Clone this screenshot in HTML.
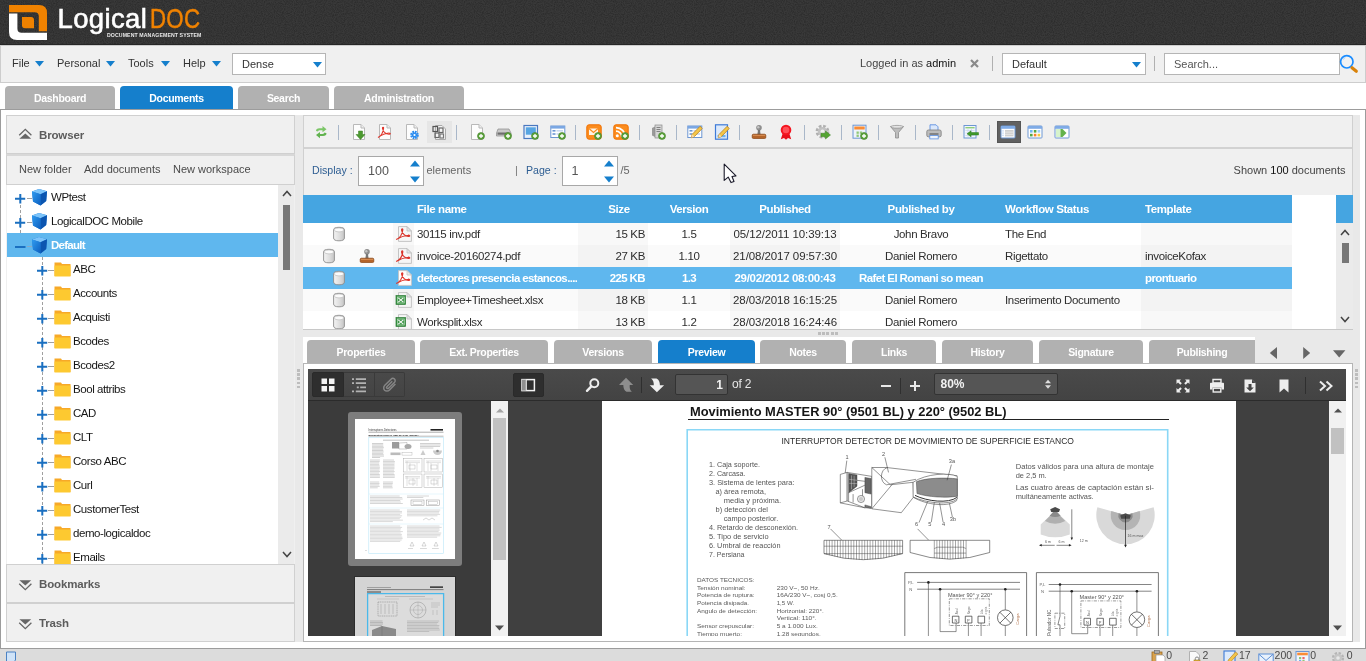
<!DOCTYPE html>
<html lang="en"><head><meta charset="utf-8"><title>LogicalDOC</title>
<style>
*{box-sizing:border-box;margin:0;padding:0}
html,body{width:1366px;height:661px;overflow:hidden;background:#fff;font-family:"Liberation Sans",sans-serif;font-size:11px;color:#333}
.abs{position:absolute}
span{white-space:nowrap}
#hdr{position:absolute;left:0;top:0;width:1366px;height:45px;background:#343434;overflow:hidden}
.logo-t{font-family:"Liberation Sans",sans-serif;font-size:27.5px;line-height:34px;letter-spacing:0.35px;color:#fff;-webkit-text-stroke:0.6px currentColor}
.lg1,.lg2{display:inline-block}
.logo-t .lg2{transform:scaleX(.81);transform-origin:0 0;margin-left:3px;-webkit-text-stroke:0.5px currentColor}
.logo-t .lg2{color:#f08200}
.logo-s{font-size:5.2px;font-weight:bold;color:#e8e8e8;letter-spacing:0.1px;line-height:6px}
#menubar{position:absolute;left:0;top:45px;width:1366px;height:38px;background:#f0f0f0;border:1px solid #cdcdcd}
#menubar>*{margin-top:-46px}
#menubar .abs{margin-left:-1px}
.mi{font-size:11px;line-height:13px;color:#333}
.sel{background:#fff;border:1px solid #b5b5b5}
.sel span{position:absolute;left:9px;top:4px;font-size:11px;line-height:13px;color:#333}
.vsep{width:1px;background:#b0b0b0}
.mtab{height:23px;background:#b1b1b1;border-radius:4px 4px 0 0;color:#fff;font-weight:bold;font-size:10.5px;text-align:center;line-height:25px}
.mtab.act{background:#157fcc}
.mtab span{display:inline-block;letter-spacing:-0.3px}
#pane{position:absolute;left:0;top:109px;width:1366px;height:540px;border:1px solid #9c9c9c;background:#fff}
#left{position:absolute;left:6px;top:115px;width:289px;height:527px;background:#f0f0f0}
.sect{width:289px;background:#f0f0f0;border:1px solid #d0d0d0}
.st{font-weight:bold;font-size:11.5px;line-height:13px;color:#5c5c5c;letter-spacing:-0.15px}
.ftool{width:289px;background:#f0f0f0;border:1px solid #d0d0d0;border-top:2px solid #d8d8d8;font-size:11px;color:#4a4a4a;line-height:13px}
.tree{background:#fff;overflow:hidden}
.trow{left:0;width:271px;height:24px}
.tsel{background:#5fb7ee}
.tsel .tt{color:#fff;font-weight:bold;letter-spacing:-0.75px}
.tt{font-size:11.5px;line-height:15px;color:#161616;letter-spacing:-0.43px}
.vdot{width:1px;background:repeating-linear-gradient(to bottom,#a0a0a0 0 3px,transparent 3px 5px)}
.hdash{height:1px;background:#a0a0a0}
#tb{position:absolute;left:303px;top:115px;width:1050px;height:34px;background:#f0f0f0;border:1px solid #d0d0d0;border-bottom:2px solid #d2d2d2}
.tsep{width:1px;height:15px;background:#a9b7c9}
#pg{position:absolute;left:303px;top:149px;width:1050px;height:46px;background:#f0f0f0;border-left:1px solid #d0d0d0;border-right:1px solid #d0d0d0}
.pl{margin-top:-1px;font-size:10.6px;line-height:13px;color:#2d5d92}
.pl2{margin-top:-1px;font-size:11px;line-height:13px;color:#666}
.spin{height:30px;margin-top:-1px;background:#fff;border:1px solid #a8a8a8}
.spin span{position:absolute;left:9px;top:7px;font-size:12.5px;line-height:15px;color:#555}
#grid{position:absolute;left:303px;top:195px;width:1050px;height:135px;background:#fff;overflow:hidden;border-bottom:1px solid #c8c8c8}
.gh{background:#45a5e1}
.ght{color:#fff;font-weight:bold;font-size:11.5px;line-height:15px;letter-spacing:-0.4px}
.grow{left:0;width:989px;height:22px;background:#fff}
.galt{background:#fafafa}
.gsel{background:#5fb7ee}
.gsel .gc{color:#fff;font-weight:bold;letter-spacing:-0.62px}
.gc{top:4px;font-size:11.5px;line-height:15px;color:#2e2e2e;letter-spacing:-0.35px}
.dtab{height:23px}
#dpane{position:absolute;left:303px;top:363px;width:1050px;height:279px;border:1px solid #b5b5b5;background:#fff}
#pdf{position:absolute;left:308px;top:369px;width:1038px;height:267px;background:#404040;overflow:hidden}
#ptb{left:0;top:0;width:1038px;height:32px;background:linear-gradient(#4a4a4a,#434343);border-bottom:1px solid #2b2b2b}
#psb{left:0;top:32px;width:200px;height:236px;background:#3b3b3b}
.pin{background:#555;border:1px solid #333;border-radius:2px;color:#eee}
.pin span{position:absolute;right:4px;top:3px;font-size:12px;line-height:14px;color:#f2f2f2;font-weight:bold}
.ptx{font-size:12px;line-height:14px;color:#e6e6e6;letter-spacing:-0.2px}
#page{left:294px;top:32px;width:634px;height:236px;background:#fff;overflow:hidden}
#status{position:absolute;left:0;top:649px;width:1366px;height:12px;background:#dcdcdc;overflow:hidden}
.sbt{font-size:10.5px;line-height:12px;color:#4a4a4a}

.gc.gd{letter-spacing:-0.08px}
.gsel .gc.gd{letter-spacing:-0.3px}

body{will-change:transform}

</style></head><body>
<svg width="0" height="0" style="position:absolute"><defs>

<filter id="i-nf" x="0" y="0" width="100%" height="100%" color-interpolation-filters="sRGB"><feTurbulence type="fractalNoise" baseFrequency="0.9" numOctaves="2" seed="3"/><feColorMatrix type="matrix" values="0 0 0 0 0.1  0 0 0 0 0.1  0 0 0 0 0.1  0.9 0 0 0 -0.3"/></filter>
<pattern id="i-noise" width="200" height="45" patternUnits="userSpaceOnUse"><rect width="200" height="45" filter="url(#i-nf)"/></pattern>
<linearGradient id="i-gcube1" x1="0" y1="0" x2="1" y2="1"><stop offset="0" stop-color="#2f9cf0"/><stop offset="1" stop-color="#0d5fc0"/></linearGradient>
<symbol id="i-cube" viewBox="0 0 17 18"><path d="M1 3.5L8 1L16 3.2L15.2 13L9.5 17.5L2 13.5Z" fill="#1672d0"/><path d="M1 3.5L8 1L16 3.2L9.5 6.2Z" fill="#7cc4fa"/><path d="M9.5 6.2L16 3.2L15.2 13L9.5 17.5Z" fill="#0b55b0"/><path d="M1 3.5L9.5 6.2V17.5L2 13.5Z" fill="url(#i-gcube1)"/></symbol>
<symbol id="i-folder" viewBox="0 0 17 16"><path d="M0.5 1.5H7L8 3H16.5V15H0.5Z" fill="#f7a928"/><path d="M0.5 4.5H16.5V15.5H0.5Z" fill="#fdc930"/></symbol>
<symbol id="i-page0" viewBox="0 0 16 16"><path d="M2.5 0.5H10L13.5 4V15.5H2.5Z" fill="#fdfdfd" stroke="#b9b9b9"/><path d="M10 0.5V4H13.5" fill="#eee" stroke="#b9b9b9"/></symbol>
<symbol id="i-plus" viewBox="0 0 16 16"><circle cx="12" cy="12" r="3.5" fill="#5ca43c" stroke="#447f28" stroke-width=".6"/><path d="M12 10V14M10 12H14" stroke="#fff" stroke-width="1.3"/></symbol>
<symbol id="i-refresh" viewBox="0 0 16 16"><path d="M3 7Q3 4.2 6.5 4.2H9.5V2L13.5 5.2L9.5 8.2V6.3H7Q5.2 6.3 5 7.6Z" fill="#7cc668"/><path d="M13.5 9.3Q13.5 12 10 12H7V14.2L3 11L7 8V9.9H9.5Q11.3 9.9 11.5 8.6Z" fill="#62b350"/></symbol>
<symbol id="i-docdown" viewBox="0 0 16 16"><use href="#i-page0"/><path d="M7.5 7H11.5V10.5H14L9.5 15.5L5 10.5H7.5Z" fill="#4c9a2f" stroke="#3a7d22" stroke-width=".5"/></symbol>
<symbol id="i-pdf" viewBox="0 0 16 16"><use href="#i-page0"/><path d="M1 13.5C3 12.5 6 9 6.6 4.2C6.8 2.8 5.2 2.8 5.5 4.5C6 7.5 9 10.5 12.5 10.2C14 10 13 8.8 11.5 9C8 9.3 4 11.5 1 13.5Z" fill="none" stroke="#e0352b" stroke-width="1.1"/></symbol>
<symbol id="i-docgear" viewBox="0 0 16 16"><use href="#i-page0"/><circle cx="10.5" cy="11" r="3" fill="none" stroke="#2b8cf0" stroke-width="2.6" stroke-dasharray="1.6 0.75"/><circle cx="10.5" cy="11" r="2.6" fill="#2b8cf0"/><circle cx="10.5" cy="11" r="1.1" fill="#fff"/></symbol>
<symbol id="i-docs2" viewBox="0 0 16 16"><path d="M4.5 1.5H11L14.5 5V15.5H4.5Z" fill="#f4f4f4" stroke="#aaa"/><rect x="2" y="2.5" width="4.5" height="5" fill="none" stroke="#555" stroke-width="1.2"/><rect x="8" y="4" width="4" height="4.5" fill="none" stroke="#666" stroke-width="1.2"/><rect x="4" y="9" width="4" height="4.5" fill="none" stroke="#666" stroke-width="1.2"/><rect x="9" y="10" width="3.5" height="4" fill="none" stroke="#777" stroke-width="1.2"/></symbol>
<symbol id="i-docadd" viewBox="0 0 16 16"><use href="#i-page0"/><use href="#i-plus"/></symbol>
<symbol id="i-scanadd" viewBox="0 0 16 16"><path d="M2 5H13L15 9V12H0.5V9Z" fill="#c9c9c9" stroke="#8a8a8a" stroke-width=".7"/><rect x="1.5" y="8.5" width="12" height="2.2" fill="#6e6e6e"/><use href="#i-plus"/></symbol>
<symbol id="i-imgadd" viewBox="0 0 16 16"><rect x="1" y="1.5" width="13.5" height="13" fill="#eaf1fb" stroke="#4a78c0" stroke-width="1.2"/><rect x="2.8" y="3.3" width="10" height="7.4" fill="#57a5e2"/><use href="#i-plus"/></symbol>
<symbol id="i-form0" viewBox="0 0 16 16"><rect x="0.8" y="2" width="14" height="11.5" fill="#fff" stroke="#6d97d3" stroke-width="1"/><rect x="0.8" y="2" width="14" height="2.6" fill="#7ba7e3"/><rect x="2.5" y="6" width="3" height="1.6" fill="#6d97d3"/><rect x="6.5" y="6" width="6.5" height="1.6" fill="#c8d8ee"/><rect x="2.5" y="9.2" width="3" height="1.6" fill="#6d97d3"/><rect x="6.5" y="9.2" width="6.5" height="1.6" fill="#c8d8ee"/></symbol>
<symbol id="i-formadd" viewBox="0 0 16 16"><use href="#i-form0"/><use href="#i-plus"/></symbol>
<symbol id="i-mailadd" viewBox="0 0 16 16"><rect x="0.8" y="0.8" width="14.4" height="14.4" rx="2.2" fill="#fb8c1e" stroke="#f07000" stroke-width="1"/><rect x="3" y="4.5" width="9" height="6.5" fill="#fff3e4"/><path d="M3 4.5L7.5 8.5L12 4.5" fill="none" stroke="#fb8c1e" stroke-width="1.2"/><use href="#i-plus"/></symbol>
<symbol id="i-rssadd" viewBox="0 0 16 16"><rect x="0.8" y="0.8" width="14.4" height="14.4" rx="2.2" fill="#fb8c1e" stroke="#f07000" stroke-width="1"/><circle cx="4.3" cy="11.7" r="1.5" fill="#fff"/><path d="M3 7.2A5.8 5.8 0 0 1 8.8 13M3 3.6A9.4 9.4 0 0 1 12.4 13" fill="none" stroke="#fff" stroke-width="1.7"/><use href="#i-plus"/></symbol>
<symbol id="i-srvadd" viewBox="0 0 16 16"><path d="M2 4L5 2.5V13L2 11.5Z" fill="#9a9a9a"/><rect x="5" y="1" width="7" height="13" fill="#d6d6d6" stroke="#8a8a8a" stroke-width=".7"/><path d="M6.5 3.5H10.5M6.5 5.5H10.5M6.5 7.5H10.5" stroke="#777" stroke-width=".9"/><use href="#i-plus"/></symbol>
<symbol id="i-pencil" viewBox="0 0 16 16"><path d="M13.2 2.2L15.2 4.6L7.5 12.5L4.3 13.8L5.2 10.3Z" fill="#f3c548" stroke="#b98324" stroke-width=".8"/><path d="M4.3 13.8L5.2 10.3L7.5 12.5Z" fill="#f4dcb0"/></symbol>
<symbol id="i-formedit" viewBox="0 0 16 16"><use href="#i-form0"/><use href="#i-pencil"/></symbol>
<symbol id="i-docedit" viewBox="0 0 16 16"><rect x="1.5" y="0.8" width="12" height="14.4" fill="#ddeafb" stroke="#3d7ad8" stroke-width="1.2"/><rect x="3.5" y="11" width="8" height="2.2" fill="#6fb2ee"/><use href="#i-pencil"/></symbol>
<symbol id="i-stamp" viewBox="0 0 16 16"><circle cx="8" cy="3.8" r="2.8" fill="#8e8e8e"/><circle cx="7.3" cy="3.2" r="1.2" fill="#c4c4c4"/><path d="M7 6H9L9.6 10.5H6.4Z" fill="#777"/><rect x="1.2" y="10.2" width="13.6" height="4.3" rx="1.2" fill="#b4642a" stroke="#8a4616" stroke-width=".7"/><rect x="2" y="11" width="12" height="1" fill="#d58a4e"/></symbol>
<symbol id="i-rosette" viewBox="0 0 16 16"><path d="M5 8.5L2.8 15.2L6 14L8 15.8L10 14L13.2 15.2L11 8.5Z" fill="#e8101a"/><circle cx="8" cy="6" r="5.3" fill="#f5141f"/><circle cx="8" cy="6" r="3.3" fill="#ff5058"/></symbol>
<symbol id="i-gear0" viewBox="0 0 16 16"><circle cx="7.5" cy="7.5" r="5.2" fill="none" stroke="#b0b0b0" stroke-width="3.4" stroke-dasharray="2.5 1.58"/><circle cx="7.5" cy="7.5" r="4.6" fill="#c2c2c2"/><circle cx="7.5" cy="7.5" r="2" fill="#f0f0f0"/></symbol>
<symbol id="i-gearnext" viewBox="0 0 16 16"><use href="#i-gear0"/><path d="M6 9.2H10.5V7L15.5 11L10.5 15V12.8H6Z" fill="#55a532" stroke="#3f8322" stroke-width=".5"/></symbol>
<symbol id="i-caladd" viewBox="0 0 16 16"><rect x="1" y="1.2" width="13" height="13" fill="#eef3fb" stroke="#6d97d3" stroke-width="1"/><rect x="2.3" y="2.5" width="10.4" height="3" fill="#fa8c35"/><rect x="4.5" y="7.5" width="2.3" height="2.3" fill="#8fc776"/><rect x="7.8" y="7.5" width="2.3" height="2.3" fill="#8fc776"/><rect x="4.5" y="10.6" width="2.3" height="2.3" fill="#8fc776"/><use href="#i-plus"/></symbol>
<symbol id="i-funnel" viewBox="0 0 16 16"><path d="M1.5 2.5H14.5L9.5 8.5V14H6.5V8.5Z" fill="#bdbdbd" stroke="#8d8d8d" stroke-width=".8"/><ellipse cx="8" cy="2.8" rx="6.3" ry="1.4" fill="#e4e4e4" stroke="#8d8d8d" stroke-width=".7"/></symbol>
<symbol id="i-printer" viewBox="0 0 16 16"><path d="M4 0.8H10L12 2.8V8H4Z" fill="#dbe8fb" stroke="#5d8fe0" stroke-width=".9"/><rect x="0.8" y="6" width="14.4" height="6.8" rx="1.6" fill="#bcbcbc" stroke="#7e7e7e" stroke-width=".8"/><rect x="3.5" y="9.3" width="9" height="1.4" fill="#6d6d6d"/><rect x="3.8" y="11.5" width="8.4" height="3.4" fill="#eef4fd" stroke="#5d8fe0" stroke-width=".8"/></symbol>
<symbol id="i-tblback" viewBox="0 0 16 16"><rect x="1" y="1.5" width="12" height="12.5" fill="#f3f7fd" stroke="#6d97d3" stroke-width="1"/><rect x="2.4" y="3" width="9.2" height="1.4" fill="#8fce7a"/><path d="M2.4 6.5H11.6M2.4 9H11.6M2.4 11.5H11.6M5 5V13M8.5 5V13" stroke="#c7d6ec" stroke-width=".7"/><path d="M4 9.8L8 6.8V8.6H15.5V11H8V12.8Z" fill="#3f9a2b" stroke="#2e7a1e" stroke-width=".5"/></symbol>
<symbol id="i-vlist" viewBox="0 0 16 16"><rect x="1" y="2" width="14" height="12" rx="0.8" fill="#fff" stroke="#6d97d3" stroke-width="1"/><rect x="1" y="2" width="14" height="2.8" fill="#7fabe6"/><rect x="5" y="6" width="8.5" height="6.4" fill="#cfcfcf"/><path d="M5 8.1H13.5M5 10.3H13.5" stroke="#f2f2f2" stroke-width=".7"/><path d="M3 6.3V12.3" stroke="#9ec2f2" stroke-width="1" stroke-dasharray="1.2 1"/></symbol>
<symbol id="i-vgrid" viewBox="0 0 16 16"><rect x="1" y="2" width="14" height="12" rx="0.8" fill="#fff" stroke="#6d97d3" stroke-width="1"/><rect x="1" y="2" width="14" height="2.8" fill="#7fabe6"/><rect x="3" y="6" width="2.6" height="2.6" fill="#72b7f5"/><rect x="6.8" y="6" width="2.6" height="2.6" fill="#56a642"/><rect x="10.6" y="6" width="2.6" height="2.6" fill="#9fd0fa"/><rect x="3" y="9.8" width="2.6" height="2.6" fill="#56a642"/><rect x="6.8" y="9.8" width="2.6" height="2.6" fill="#fb7f2c"/><rect x="10.6" y="9.8" width="2.6" height="2.6" fill="#f4cb3e"/></symbol>
<symbol id="i-vnext" viewBox="0 0 16 16"><rect x="1" y="2" width="14" height="12" rx="0.8" fill="#fff" stroke="#6d97d3" stroke-width="1"/><rect x="1" y="2" width="14" height="2.8" fill="#7fabe6"/><rect x="2" y="5" width="4.5" height="8" fill="#d6f3cc"/><path d="M6.5 5H8.5L12.5 9L8.5 13H6.5Z" fill="#63b24b"/></symbol>
<linearGradient id="i-gdisk" x1="0" y1="0" x2="1" y2="0"><stop offset="0" stop-color="#f4f4f4"/><stop offset=".55" stop-color="#dedede"/><stop offset="1" stop-color="#c4c4c4"/></linearGradient><symbol id="i-disk" viewBox="0 0 16 16"><path d="M2.6 3.8Q2.6 1.3 8 1.3Q13.4 1.3 13.4 3.8V12Q13.4 14.8 8 14.8Q2.6 14.8 2.6 12Z" fill="url(#i-gdisk)" stroke="#8c8c8c" stroke-width=".9"/><ellipse cx="8" cy="3.9" rx="4.7" ry="2" fill="#fbfbfb" stroke="#b0b0b0" stroke-width=".6"/></symbol>
<symbol id="i-xls" viewBox="0 0 16 16"><use href="#i-page0"/><rect x="0.5" y="5.5" width="8.5" height="8" fill="#2f8a3c"/><path d="M1.8 7L7.6 12M7.6 7L1.8 12" stroke="#fff" stroke-width="1.1"/><path d="M1.5 9.5H8" stroke="#bfe3c3" stroke-width=".6"/></symbol>
<symbol id="i-gpage" viewBox="0 0 18 16"><path d="M4.5 0.6H13L17.4 5V15.4H4.5Z" fill="#fdfdfd" stroke="#c4c4c4" stroke-width=".9"/><path d="M13 0.6V5H17.4Z" fill="#ececec" stroke="#c4c4c4" stroke-width=".8"/></symbol>
<symbol id="i-gpdf" viewBox="0 0 18 16"><use href="#i-gpage"/><path d="M2.2 13.6C5 12.3 8.2 8.5 8.8 4C9 2.4 7.4 2.4 7.6 4.2C8 7.5 11.5 10.8 15 10.4C16.4 10.2 15.6 9 14 9.2C10 9.6 5.5 11.5 2.2 13.6Z" fill="none" stroke="#e0352b" stroke-width="1.15"/></symbol>
<symbol id="i-gxls" viewBox="0 0 18 16"><use href="#i-gpage"/><rect x="2" y="3.6" width="9.6" height="8.8" fill="#3c9a47" stroke="#2c7c36" stroke-width=".7"/><rect x="3.4" y="5" width="6.8" height="6" fill="none" stroke="#d8f0da" stroke-width=".6"/><path d="M4.3 5.8L9.3 10.2M9.3 5.8L4.3 10.2" stroke="#fff" stroke-width="1.1"/></symbol>
<symbol id="i-pv_thumbs" viewBox="0 0 16 16"><path d="M1.5 1.5H7V7H1.5ZM9 1.5H14.5V7H9ZM1.5 9H7V14.5H1.5ZM9 9H14.5V14.5H9Z" fill="#f4f4f4"/></symbol>
<symbol id="i-pv_outline" viewBox="0 0 16 16"><path d="M1 2.2H3M4.8 2.2H15M1 6.2H3M4.8 6.2H15M5.8 10.3H7.8M9.2 10.3H15M1 14.3H3M4.8 14.3H15" stroke="#b2b2b2" stroke-width="1.7"/></symbol>
<symbol id="i-pv_attach" viewBox="0 0 16 16"><path d="M12.8 7.2L7.6 12.4C6.2 13.8 4.2 13.6 3.2 12.6C2.2 11.6 2 9.7 3.4 8.3L8.9 2.8C9.8 1.9 11.2 1.9 12 2.7C12.8 3.5 12.8 4.8 11.9 5.7L6.7 10.9C6.3 11.3 5.6 11.3 5.2 10.9C4.8 10.5 4.8 9.9 5.2 9.5L10 4.7" fill="none" stroke="#858585" stroke-width="1.3"/></symbol>
<symbol id="i-pv_sidebar" viewBox="0 0 16 16"><rect x="2" y="2.6" width="12.4" height="11" fill="none" stroke="#f2f2f2" stroke-width="1.5"/><rect x="2" y="2.6" width="4.3" height="11" fill="#8f8f8f"/><path d="M6.3 2.6V13.6" stroke="#f2f2f2" stroke-width="1"/></symbol>
<symbol id="i-pv_find" viewBox="0 0 16 16"><circle cx="9.3" cy="6.3" r="4" fill="none" stroke="#eee" stroke-width="2"/><path d="M6.3 9.4L2 13.8" stroke="#eee" stroke-width="2.4" stroke-linecap="round"/></symbol>
<symbol id="i-pv_up" viewBox="0 0 16 16"><path d="M8 0.7L15.2 8H11.7Q11.2 12.5 13.8 14.7H8.5Q5.3 13 5.3 8H1Z" fill="#8d8d8d"/></symbol>
<symbol id="i-pv_down" viewBox="0 0 16 16"><path d="M7.9 15.2L0.7 8.3H4.8Q5 3.5 2.1 1.4H7.5Q10.9 3 10.9 8.3H15.1Z" fill="#efefef"/></symbol>
<symbol id="i-pv_full" viewBox="0 0 16 16"><path d="M1.5 1.5H6L4.5 3L6.8 5.3L5.3 6.8L3 4.5L1.5 6ZM14.5 1.5V6L13 4.5L10.7 6.8L9.2 5.3L11.5 3L10 1.5ZM1.5 14.5V10L3 11.5L5.3 9.2L6.8 10.7L4.5 13L6 14.5ZM14.5 14.5H10L11.5 13L9.2 10.7L10.7 9.2L13 11.5L14.5 10Z" fill="#eee"/></symbol>
<symbol id="i-pv_print" viewBox="0 0 16 16"><path d="M4 1.5H12V5H4Z" fill="none" stroke="#eee" stroke-width="1.4"/><path d="M1 5.5Q1 4.8 1.8 4.8H14.2Q15 4.8 15 5.5V11.5H12.5V9.5H3.5V11.5H1Z" fill="#eee"/><rect x="4.2" y="10.2" width="7.6" height="3.8" fill="none" stroke="#eee" stroke-width="1.4"/></symbol>
<symbol id="i-pv_dl" viewBox="0 0 16 16"><path d="M2.5 1.5H10L13.5 5V14.5H2.5Z" fill="#eee"/><path d="M10 1.5V5H13.5Z" fill="#444"/><path d="M6.5 6H9.5V9.5H11.8L8 13.2L4.2 9.5H6.5Z" fill="#444"/></symbol>
<symbol id="i-pv_bm" viewBox="0 0 16 16"><path d="M3.5 1.5H12.5V14.5L8 10.5L3.5 14.5Z" fill="#eee"/></symbol>
<symbol id="i-pv_more" viewBox="0 0 16 16"><path d="M2 3.5L7 8L2 12.5M8.5 3.5L13.5 8L8.5 12.5" fill="none" stroke="#eee" stroke-width="2"/></symbol>
<symbol id="i-sb_note" viewBox="0 0 12 13"><path d="M1.5 1H10.5V9L7.5 12.5H1.5Z" fill="#cfe3f8" stroke="#4b82c4" stroke-width="1"/></symbol>
<symbol id="i-sb_clip" viewBox="0 0 16 14"><rect x="2" y="2" width="10" height="12" fill="#d9a24c" stroke="#9c6a22" stroke-width=".8"/><rect x="4.5" y="0.5" width="5" height="3" fill="#aaa" stroke="#666" stroke-width=".6"/><path d="M6 5H13L15 7V14H6Z" fill="#fff" stroke="#999" stroke-width=".7"/></symbol>
<symbol id="i-sb_lock" viewBox="0 0 16 14"><path d="M2.5 0.5H9L12.5 4V14H2.5Z" fill="#fafafa" stroke="#aaa" stroke-width=".9"/><rect x="7" y="9" width="6" height="5" fill="#e2b13c" stroke="#9c7a1c" stroke-width=".6"/><path d="M8.3 9V7.5Q8.3 6 10 6Q11.7 6 11.7 7.5V9" fill="none" stroke="#888" stroke-width="1"/></symbol>
<symbol id="i-sb_edit" viewBox="0 0 16 14"><rect x="1" y="1" width="11" height="12.5" fill="#ddeafb" stroke="#3d7ad8" stroke-width="1.1"/><path d="M12.5 2L14.8 4L7.5 12L4.5 13.2L5.3 10Z" fill="#f3c548" stroke="#b98324" stroke-width=".7"/></symbol>
<symbol id="i-sb_mail" viewBox="0 0 16 14"><rect x="0.8" y="3" width="14.4" height="10" fill="#e8f1fc" stroke="#5d8fd6" stroke-width="1"/><path d="M1 3.3L8 9.5L15 3.3" fill="none" stroke="#5d8fd6" stroke-width="1"/></symbol>
<symbol id="i-sb_cal" viewBox="0 0 16 14"><rect x="1" y="1.5" width="13" height="12" fill="#f2f6fc" stroke="#6d97d3" stroke-width="1"/><rect x="2.2" y="2.7" width="10.6" height="2.6" fill="#fa8c35"/><rect x="4" y="7" width="2.2" height="2.2" fill="#8fc776"/><rect x="7.4" y="7" width="2.2" height="2.2" fill="#e66"/><rect x="4" y="10" width="2.2" height="2.2" fill="#79aeea"/><rect x="7.4" y="10" width="2.2" height="2.2" fill="#8fc776"/></symbol>
<symbol id="i-sb_gear" viewBox="0 0 16 14"><circle cx="8" cy="8" r="4.6" fill="none" stroke="#b5b5b5" stroke-width="3" stroke-dasharray="2.2 1.41"/><circle cx="8" cy="8" r="4" fill="#c6c6c6"/><circle cx="8" cy="8" r="1.8" fill="#e8e8e8"/></symbol>

</defs></svg>
<div id="hdr">
<svg class="abs" style="left:0;top:0" width="1366" height="45"><rect width="1366" height="45" fill="#393939"/><rect width="1366" height="45" fill="url(#i-noise)"/><rect y="44" width="1366" height="1" fill="#262626"/></svg>
<svg class="abs" style="left:9px;top:5px" width="38" height="35" viewBox="0 0 38 35">
<path d="M0 0H30Q38 0 38 8V26.2H29.8V11.5Q29.8 7.3 25.5 7.3H0Z" fill="#f08200"/>
<path d="M0 8.6H8.4V23.5Q8.4 27.8 12.7 27.8H38V35H8Q0 35 0 27Z" fill="#fff"/>
<path d="M13 12H22Q25 12 25 15V23.3H16Q13 23.3 13 20.3Z" fill="#f08200"/>
</svg>
<div class="abs logo-t" style="left:57.5px;top:2px"><span class="lg1">Logical</span><span class="lg2">DOC</span></div>
<div class="abs logo-s" style="left:107px;top:31.5px">DOCUMENT MANAGEMENT SYSTEM</div>
</div>
<div id="menubar"><span class="abs mi" style="left:12px;top:57px">File</span><svg class="abs" style="left:35px;top:61px" width="9" height="6"><path d="M0 0H9L4.5 5.5Z" fill="#157fcc"/></svg><span class="abs mi" style="left:57px;top:57px">Personal</span><svg class="abs" style="left:106px;top:61px" width="9" height="6"><path d="M0 0H9L4.5 5.5Z" fill="#157fcc"/></svg><span class="abs mi" style="left:128px;top:57px">Tools</span><svg class="abs" style="left:161px;top:61px" width="9" height="6"><path d="M0 0H9L4.5 5.5Z" fill="#157fcc"/></svg><span class="abs mi" style="left:183px;top:57px">Help</span><svg class="abs" style="left:212px;top:61px" width="9" height="6"><path d="M0 0H9L4.5 5.5Z" fill="#157fcc"/></svg><div class="abs sel" style="left:232px;top:53px;width:94px;height:22px"><span>Dense</span></div><svg class="abs" style="left:313px;top:61.5px" width="9" height="6"><path d="M0 0H9L4.5 5.5Z" fill="#157fcc"/></svg><span class="abs mi" style="left:860px;top:57px;color:#444">Logged in as <span style="color:#111">admin</span></span><svg class="abs" style="left:970px;top:59px" width="9" height="9"><path d="M1 1L8 8M8 1L1 8" stroke="#8a8a8a" stroke-width="2.2"/></svg><div class="abs vsep" style="left:992px;top:56px;height:15px"></div><div class="abs sel" style="left:1002px;top:53px;width:144px;height:22px"><span>Default</span></div><svg class="abs" style="left:1132px;top:61.5px" width="9" height="6"><path d="M0 0H9L4.5 5.5Z" fill="#157fcc"/></svg><div class="abs vsep" style="left:1154px;top:56px;height:15px"></div><div class="abs sel" style="left:1164px;top:53px;width:176px;height:22px"><span style="color:#555">Search...</span></div><svg class="abs" style="left:1338px;top:53px" width="22" height="22" viewBox="0 0 22 22"><circle cx="8.8" cy="8.8" r="6.2" fill="#f2f2f2" stroke="#1a8cff" stroke-width="1.7"/><path d="M5 6.5L7.5 4.2" stroke="#9fd0ff" stroke-width="1"/><path d="M14 14.8L18.3 18.3" stroke="#d9820a" stroke-width="3.2" stroke-linecap="round"/></svg></div>
<div class="abs mtab" style="left:5px;top:86px;width:110px"><span>Dashboard</span></div><div class="abs mtab act" style="left:120px;top:86px;width:113px"><span>Documents</span></div><div class="abs mtab" style="left:238px;top:86px;width:91px"><span>Search</span></div><div class="abs mtab" style="left:334px;top:86px;width:130px"><span>Administration</span></div>
<div id="pane"></div>
<div id="left"><div class="abs sect" style="left:0;top:0;height:39px"><svg class="abs" style="left:11px;top:12px" width="14" height="13" viewBox="0 0 14 13"><path d="M1.2 7.3L7.3 1.4L13.4 7.3" fill="none" stroke="#666" stroke-width="1.3"/><path d="M1.4 10.8H13.2L7.3 5.4Z" fill="#666"/></svg><span class="abs st" style="left:32px;top:13px">Browser</span></div><div class="abs ftool" style="left:0;top:39px;height:31px"><span class="abs" style="left:12px;top:7px">New folder</span><span class="abs" style="left:77px;top:7px">Add documents</span><span class="abs" style="left:166px;top:7px">New workspace</span></div><div class="abs tree" style="left:1px;top:70px;width:271px;height:379px"><div class="abs vdot" style="left:13px;top:20px;height:36px"></div><div class="abs vdot" style="left:35px;top:72px;height:310px"></div><div class="abs trow" style="top:0px"><svg class="abs" style="left:7px;top:7px" width="13" height="13"><path d="M6.3 2V11.5M1 6.7H11.2" stroke="#1a6fc0" stroke-width="2"/></svg><div class="abs hdash" style="left:19.5px;top:13px;width:5.5px"></div><svg class="abs" style="left:24px;top:3px" width="17" height="18" ><use href="#i-cube"/></svg><span class="abs tt" style="left:44px;top:4.5px">WPtest</span></div><div class="abs trow" style="top:24px"><svg class="abs" style="left:7px;top:7px" width="13" height="13"><path d="M6.3 2V11.5M1 6.7H11.2" stroke="#1a6fc0" stroke-width="2"/></svg><div class="abs hdash" style="left:19.5px;top:13px;width:5.5px"></div><svg class="abs" style="left:24px;top:3px" width="17" height="18" ><use href="#i-cube"/></svg><span class="abs tt" style="left:44px;top:4.5px">LogicalDOC Mobile</span></div><div class="abs trow tsel" style="top:48px"><svg class="abs" style="left:7px;top:7px" width="13" height="13"><path d="M1 7H11.5" stroke="#1a6fc0" stroke-width="2"/></svg><div class="abs hdash" style="left:19.5px;top:13px;width:5.5px;background:#8aa9c4"></div><svg class="abs" style="left:24px;top:3px" width="17" height="18" ><use href="#i-cube"/></svg><span class="abs tt" style="left:44px;top:4.5px">Default</span></div><div class="abs trow" style="top:72px"><svg class="abs" style="left:29px;top:7px" width="13" height="13"><path d="M6.3 2V11.5M1 6.7H11.2" stroke="#1a6fc0" stroke-width="2"/></svg><div class="abs hdash" style="left:41px;top:13px;width:6px"></div><svg class="abs" style="left:47px;top:4px" width="17" height="16" ><use href="#i-folder"/></svg><span class="abs tt" style="left:66px;top:4.5px">ABC</span></div><div class="abs trow" style="top:96px"><svg class="abs" style="left:29px;top:7px" width="13" height="13"><path d="M6.3 2V11.5M1 6.7H11.2" stroke="#1a6fc0" stroke-width="2"/></svg><div class="abs hdash" style="left:41px;top:13px;width:6px"></div><svg class="abs" style="left:47px;top:4px" width="17" height="16" ><use href="#i-folder"/></svg><span class="abs tt" style="left:66px;top:4.5px">Accounts</span></div><div class="abs trow" style="top:120px"><svg class="abs" style="left:29px;top:7px" width="13" height="13"><path d="M6.3 2V11.5M1 6.7H11.2" stroke="#1a6fc0" stroke-width="2"/></svg><div class="abs hdash" style="left:41px;top:13px;width:6px"></div><svg class="abs" style="left:47px;top:4px" width="17" height="16" ><use href="#i-folder"/></svg><span class="abs tt" style="left:66px;top:4.5px">Acquisti</span></div><div class="abs trow" style="top:144px"><svg class="abs" style="left:29px;top:7px" width="13" height="13"><path d="M6.3 2V11.5M1 6.7H11.2" stroke="#1a6fc0" stroke-width="2"/></svg><div class="abs hdash" style="left:41px;top:13px;width:6px"></div><svg class="abs" style="left:47px;top:4px" width="17" height="16" ><use href="#i-folder"/></svg><span class="abs tt" style="left:66px;top:4.5px">Bcodes</span></div><div class="abs trow" style="top:168px"><svg class="abs" style="left:29px;top:7px" width="13" height="13"><path d="M6.3 2V11.5M1 6.7H11.2" stroke="#1a6fc0" stroke-width="2"/></svg><div class="abs hdash" style="left:41px;top:13px;width:6px"></div><svg class="abs" style="left:47px;top:4px" width="17" height="16" ><use href="#i-folder"/></svg><span class="abs tt" style="left:66px;top:4.5px">Bcodes2</span></div><div class="abs trow" style="top:192px"><svg class="abs" style="left:29px;top:7px" width="13" height="13"><path d="M6.3 2V11.5M1 6.7H11.2" stroke="#1a6fc0" stroke-width="2"/></svg><div class="abs hdash" style="left:41px;top:13px;width:6px"></div><svg class="abs" style="left:47px;top:4px" width="17" height="16" ><use href="#i-folder"/></svg><span class="abs tt" style="left:66px;top:4.5px">Bool attribs</span></div><div class="abs trow" style="top:216px"><svg class="abs" style="left:29px;top:7px" width="13" height="13"><path d="M6.3 2V11.5M1 6.7H11.2" stroke="#1a6fc0" stroke-width="2"/></svg><div class="abs hdash" style="left:41px;top:13px;width:6px"></div><svg class="abs" style="left:47px;top:4px" width="17" height="16" ><use href="#i-folder"/></svg><span class="abs tt" style="left:66px;top:4.5px">CAD</span></div><div class="abs trow" style="top:240px"><svg class="abs" style="left:29px;top:7px" width="13" height="13"><path d="M6.3 2V11.5M1 6.7H11.2" stroke="#1a6fc0" stroke-width="2"/></svg><div class="abs hdash" style="left:41px;top:13px;width:6px"></div><svg class="abs" style="left:47px;top:4px" width="17" height="16" ><use href="#i-folder"/></svg><span class="abs tt" style="left:66px;top:4.5px">CLT</span></div><div class="abs trow" style="top:264px"><svg class="abs" style="left:29px;top:7px" width="13" height="13"><path d="M6.3 2V11.5M1 6.7H11.2" stroke="#1a6fc0" stroke-width="2"/></svg><div class="abs hdash" style="left:41px;top:13px;width:6px"></div><svg class="abs" style="left:47px;top:4px" width="17" height="16" ><use href="#i-folder"/></svg><span class="abs tt" style="left:66px;top:4.5px">Corso ABC</span></div><div class="abs trow" style="top:288px"><svg class="abs" style="left:29px;top:7px" width="13" height="13"><path d="M6.3 2V11.5M1 6.7H11.2" stroke="#1a6fc0" stroke-width="2"/></svg><div class="abs hdash" style="left:41px;top:13px;width:6px"></div><svg class="abs" style="left:47px;top:4px" width="17" height="16" ><use href="#i-folder"/></svg><span class="abs tt" style="left:66px;top:4.5px">Curl</span></div><div class="abs trow" style="top:312px"><svg class="abs" style="left:29px;top:7px" width="13" height="13"><path d="M6.3 2V11.5M1 6.7H11.2" stroke="#1a6fc0" stroke-width="2"/></svg><div class="abs hdash" style="left:41px;top:13px;width:6px"></div><svg class="abs" style="left:47px;top:4px" width="17" height="16" ><use href="#i-folder"/></svg><span class="abs tt" style="left:66px;top:4.5px">CustomerTest</span></div><div class="abs trow" style="top:336px"><svg class="abs" style="left:29px;top:7px" width="13" height="13"><path d="M6.3 2V11.5M1 6.7H11.2" stroke="#1a6fc0" stroke-width="2"/></svg><div class="abs hdash" style="left:41px;top:13px;width:6px"></div><svg class="abs" style="left:47px;top:4px" width="17" height="16" ><use href="#i-folder"/></svg><span class="abs tt" style="left:66px;top:4.5px">demo-logicaldoc</span></div><div class="abs trow" style="top:360px"><svg class="abs" style="left:29px;top:7px" width="13" height="13"><path d="M6.3 2V11.5M1 6.7H11.2" stroke="#1a6fc0" stroke-width="2"/></svg><div class="abs hdash" style="left:41px;top:13px;width:6px"></div><svg class="abs" style="left:47px;top:4px" width="17" height="16" ><use href="#i-folder"/></svg><span class="abs tt" style="left:66px;top:4.5px">Emails</span></div></div><div class="abs" style="left:272px;top:70px;width:16px;height:379px;background:#ebebeb"><svg class="abs" style="left:4px;top:5px" width="10" height="7"><path d="M1 6L5 1.5L9 6" fill="none" stroke="#444" stroke-width="1.5"/></svg><div class="abs" style="left:5px;top:20px;width:7px;height:65px;background:#777"></div><svg class="abs" style="left:4px;top:366px" width="10" height="7"><path d="M1 1L5 5.5L9 1" fill="none" stroke="#444" stroke-width="1.5"/></svg></div><div class="abs sect" style="left:0;top:449px;height:39px"><svg class="abs" style="left:11px;top:13px" width="14" height="13" viewBox="0 0 14 13"><path d="M1.4 2.2H13.2L7.3 7.6Z" fill="#666"/><path d="M1.2 5.7L7.3 11.6L13.4 5.7" fill="none" stroke="#666" stroke-width="1.3"/></svg><span class="abs st" style="left:32px;top:13px">Bookmarks</span></div><div class="abs sect" style="left:0;top:488px;height:39px"><svg class="abs" style="left:11px;top:13px" width="14" height="13" viewBox="0 0 14 13"><path d="M1.4 2.2H13.2L7.3 7.6Z" fill="#666"/><path d="M1.2 5.7L7.3 11.6L13.4 5.7" fill="none" stroke="#666" stroke-width="1.3"/></svg><span class="abs st" style="left:32px;top:13px">Trash</span></div></div>
<div class="abs" style="left:295px;top:115px;width:8px;height:527px;background:#e9e9e9"></div><div class="abs" style="left:1353px;top:115px;width:7px;height:527px;background:#e9e9e9"></div><div class="abs" style="left:303px;top:329px;width:1050px;height:8px;background:#e9e9e9"></div><div class="abs" style="left:297px;top:369.0px;width:3px;height:2.6px;background:#bdbdbd"></div><div class="abs" style="left:297px;top:373.2px;width:3px;height:2.6px;background:#bdbdbd"></div><div class="abs" style="left:297px;top:377.4px;width:3px;height:2.6px;background:#bdbdbd"></div><div class="abs" style="left:297px;top:381.6px;width:3px;height:2.6px;background:#bdbdbd"></div><div class="abs" style="left:297px;top:385.8px;width:3px;height:2.6px;background:#bdbdbd"></div><div class="abs" style="left:1355px;top:369.0px;width:3px;height:2.6px;background:#bdbdbd"></div><div class="abs" style="left:1355px;top:373.2px;width:3px;height:2.6px;background:#bdbdbd"></div><div class="abs" style="left:1355px;top:377.4px;width:3px;height:2.6px;background:#bdbdbd"></div><div class="abs" style="left:1355px;top:381.6px;width:3px;height:2.6px;background:#bdbdbd"></div><div class="abs" style="left:1355px;top:385.8px;width:3px;height:2.6px;background:#bdbdbd"></div><div id="tb"><svg class="abs" style="left:8.5px;top:7.5px" width="16" height="16" ><use href="#i-refresh"/></svg><div class="abs tsep" style="left:34px;top:9px"></div><svg class="abs" style="left:46.5px;top:7.5px" width="16" height="16" ><use href="#i-docdown"/></svg><svg class="abs" style="left:72.5px;top:7.5px" width="16" height="16" ><use href="#i-pdf"/></svg><svg class="abs" style="left:99.5px;top:7.5px" width="16" height="16" ><use href="#i-docgear"/></svg><div class="abs" style="left:123px;top:4.5px;width:25px;height:22.5px;background:#e6e6e6"></div><svg class="abs" style="left:126.5px;top:7.5px" width="16" height="16" ><use href="#i-docs2"/></svg><div class="abs tsep" style="left:152px;top:9px"></div><svg class="abs" style="left:164.5px;top:7.5px" width="16" height="16" ><use href="#i-docadd"/></svg><svg class="abs" style="left:191.5px;top:7.5px" width="16" height="16" ><use href="#i-scanadd"/></svg><svg class="abs" style="left:218.5px;top:7.5px" width="16" height="16" ><use href="#i-imgadd"/></svg><svg class="abs" style="left:245.5px;top:7.5px" width="16" height="16" ><use href="#i-formadd"/></svg><div class="abs tsep" style="left:270.5px;top:9px"></div><svg class="abs" style="left:281.5px;top:7.5px" width="16" height="16" ><use href="#i-mailadd"/></svg><svg class="abs" style="left:308.5px;top:7.5px" width="16" height="16" ><use href="#i-rssadd"/></svg><div class="abs tsep" style="left:335px;top:9px"></div><svg class="abs" style="left:345.5px;top:7.5px" width="16" height="16" ><use href="#i-srvadd"/></svg><div class="abs tsep" style="left:372px;top:9px"></div><svg class="abs" style="left:382.5px;top:7.5px" width="16" height="16" ><use href="#i-formedit"/></svg><svg class="abs" style="left:409.5px;top:7.5px" width="16" height="16" ><use href="#i-docedit"/></svg><div class="abs tsep" style="left:435px;top:9px"></div><svg class="abs" style="left:446.5px;top:7.5px" width="16" height="16" ><use href="#i-stamp"/></svg><svg class="abs" style="left:473.5px;top:7.5px" width="16" height="16" ><use href="#i-rosette"/></svg><div class="abs tsep" style="left:499.5px;top:9px"></div><svg class="abs" style="left:510.5px;top:7.5px" width="16" height="16" ><use href="#i-gearnext"/></svg><div class="abs tsep" style="left:536.5px;top:9px"></div><svg class="abs" style="left:547.5px;top:7.5px" width="16" height="16" ><use href="#i-caladd"/></svg><div class="abs tsep" style="left:573.5px;top:9px"></div><svg class="abs" style="left:584.5px;top:7.5px" width="16" height="16" ><use href="#i-funnel"/></svg><div class="abs tsep" style="left:610.5px;top:9px"></div><svg class="abs" style="left:621.5px;top:7.5px" width="16" height="16" ><use href="#i-printer"/></svg><div class="abs tsep" style="left:647.5px;top:9px"></div><svg class="abs" style="left:658.5px;top:7.5px" width="16" height="16" ><use href="#i-tblback"/></svg><div class="abs tsep" style="left:684.5px;top:9px"></div><div class="abs" style="left:692.5px;top:4.5px;width:24px;height:22px;background:#616161;border:1px solid #555"></div><svg class="abs" style="left:695.5px;top:7.5px" width="16" height="16" ><use href="#i-vlist"/></svg><svg class="abs" style="left:722.5px;top:7.5px" width="16" height="16" ><use href="#i-vgrid"/></svg><svg class="abs" style="left:749.5px;top:7.5px" width="16" height="16" ><use href="#i-vnext"/></svg></div>
<div id="pg"><span class="abs pl" style="left:8px;top:16px">Display :</span><div class="abs spin" style="left:54px;top:8px;width:66px"><span>100</span><svg class="abs" style="right:3px;top:3px" width="10" height="7"><path d="M0 6.5H10L5 0.5Z" fill="#157fcc"/></svg><svg class="abs" style="right:3px;top:18.5px" width="10" height="7"><path d="M0 0.5H10L5 6.5Z" fill="#157fcc"/></svg></div><span class="abs pl2" style="left:122.5px;top:16px">elements</span><span class="abs pl2" style="left:211px;top:16px;color:#777">|</span><span class="abs pl" style="left:222px;top:16px">Page :</span><div class="abs spin" style="left:257.5px;top:8px;width:56px"><span>1</span><svg class="abs" style="right:3px;top:3px" width="10" height="7"><path d="M0 6.5H10L5 0.5Z" fill="#157fcc"/></svg><svg class="abs" style="right:3px;top:18.5px" width="10" height="7"><path d="M0 0.5H10L5 6.5Z" fill="#157fcc"/></svg></div><span class="abs pl2" style="left:316.5px;top:16px">/5</span><span class="abs pl2" style="right:6.5px;top:16px;color:#444">Shown <b style="font-weight:normal;color:#111">100</b> documents</span></div>
<div id="grid"><div class="abs gh" style="left:0;top:0;width:989px;height:28px"></div><div class="abs gh" style="left:1033px;top:0;width:17px;height:28px"></div><span class="abs ght" style="left:114px;top:7px">File name</span><span class="abs ght" style="left:256px;width:120px;text-align:center;top:7px">Size</span><span class="abs ght" style="left:326px;width:120px;text-align:center;top:7px">Version</span><span class="abs ght" style="left:422px;width:120px;text-align:center;top:7px">Published</span><span class="abs ght" style="left:558px;width:120px;text-align:center;top:7px">Published by</span><span class="abs ght" style="left:702px;top:7px">Workflow Status</span><span class="abs ght" style="left:842px;top:7px">Template</span><div class="abs grow" style="top:28px"><svg class="abs" style="left:28px;top:3px" width="16" height="16" ><use href="#i-disk"/></svg><svg class="abs" style="left:90.5px;top:3px" width="18" height="16" ><use href="#i-gpdf"/></svg><span class="abs gc" style="left:114px;width:160px;overflow:hidden;white-space:nowrap">30115 inv.pdf</span><span class="abs gc" style="left:282px;width:60px;text-align:right">15 KB</span><span class="abs gc" style="left:346px;width:80px;text-align:center">1.5</span><span class="abs gc gd" style="left:402px;width:160px;text-align:center">05/12/2011 10:39:13</span><span class="abs gc" style="left:528px;width:180px;text-align:center">John Bravo</span><span class="abs gc" style="left:702px">The End</span><span class="abs gc" style="left:842px"></span></div><div class="abs grow galt" style="top:50px"><svg class="abs" style="left:18px;top:3px" width="16" height="16" ><use href="#i-disk"/></svg><svg class="abs" style="left:56px;top:3px" width="16" height="16" ><use href="#i-stamp"/></svg><svg class="abs" style="left:90.5px;top:3px" width="18" height="16" ><use href="#i-gpdf"/></svg><span class="abs gc" style="left:114px;width:160px;overflow:hidden;white-space:nowrap">invoice-20160274.pdf</span><span class="abs gc" style="left:282px;width:60px;text-align:right">27 KB</span><span class="abs gc" style="left:346px;width:80px;text-align:center">1.10</span><span class="abs gc gd" style="left:402px;width:160px;text-align:center">21/08/2017 09:57:30</span><span class="abs gc" style="left:528px;width:180px;text-align:center">Daniel Romero</span><span class="abs gc" style="left:702px">Rigettato</span><span class="abs gc" style="left:842px">invoiceKofax</span></div><div class="abs grow gsel" style="top:72px"><svg class="abs" style="left:28px;top:3px" width="16" height="16" ><use href="#i-disk"/></svg><svg class="abs" style="left:90.5px;top:3px" width="18" height="16" ><use href="#i-gpdf"/></svg><span class="abs gc" style="left:114px;width:160px;overflow:hidden;white-space:nowrap">detectores presencia estancos....</span><span class="abs gc" style="left:282px;width:60px;text-align:right">225 KB</span><span class="abs gc" style="left:346px;width:80px;text-align:center">1.3</span><span class="abs gc gd" style="left:402px;width:160px;text-align:center">29/02/2012 08:00:43</span><span class="abs gc" style="left:528px;width:180px;text-align:center">Rafet El Romani so mean</span><span class="abs gc" style="left:702px"></span><span class="abs gc" style="left:842px">prontuario</span></div><div class="abs grow galt" style="top:94px"><svg class="abs" style="left:28px;top:3px" width="16" height="16" ><use href="#i-disk"/></svg><svg class="abs" style="left:90.5px;top:3px" width="18" height="16" ><use href="#i-gxls"/></svg><span class="abs gc" style="left:114px;width:160px;overflow:hidden;white-space:nowrap">Employee+Timesheet.xlsx</span><span class="abs gc" style="left:282px;width:60px;text-align:right">18 KB</span><span class="abs gc" style="left:346px;width:80px;text-align:center">1.1</span><span class="abs gc gd" style="left:402px;width:160px;text-align:center">28/03/2018 16:15:25</span><span class="abs gc" style="left:528px;width:180px;text-align:center">Daniel Romero</span><span class="abs gc" style="left:702px">Inserimento Documento</span><span class="abs gc" style="left:842px"></span></div><div class="abs grow" style="top:116px"><svg class="abs" style="left:28px;top:3px" width="16" height="16" ><use href="#i-disk"/></svg><svg class="abs" style="left:90.5px;top:3px" width="18" height="16" ><use href="#i-gxls"/></svg><span class="abs gc" style="left:114px;width:160px;overflow:hidden;white-space:nowrap">Worksplit.xlsx</span><span class="abs gc" style="left:282px;width:60px;text-align:right">13 KB</span><span class="abs gc" style="left:346px;width:80px;text-align:center">1.2</span><span class="abs gc gd" style="left:402px;width:160px;text-align:center">28/03/2018 16:24:46</span><span class="abs gc" style="left:528px;width:180px;text-align:center">Daniel Romero</span><span class="abs gc" style="left:702px"></span><span class="abs gc" style="left:842px"></span></div><div class="abs" style="left:90px;top:28px;width:21px;height:44px;background:rgba(0,0,0,.028)"></div><div class="abs" style="left:90px;top:94px;width:21px;height:40px;background:rgba(0,0,0,.028)"></div><div class="abs" style="left:275px;top:28px;width:70px;height:44px;background:rgba(0,0,0,.028)"></div><div class="abs" style="left:275px;top:94px;width:70px;height:40px;background:rgba(0,0,0,.028)"></div><div class="abs" style="left:427px;top:28px;width:110px;height:44px;background:rgba(0,0,0,.028)"></div><div class="abs" style="left:427px;top:94px;width:110px;height:40px;background:rgba(0,0,0,.028)"></div><div class="abs" style="left:838px;top:28px;width:151px;height:44px;background:rgba(0,0,0,.028)"></div><div class="abs" style="left:838px;top:94px;width:151px;height:40px;background:rgba(0,0,0,.028)"></div><div class="abs" style="left:1033px;top:28px;width:17px;height:106px;background:#ebebeb"><svg class="abs" style="left:4px;top:6px" width="10" height="7"><path d="M1 6L5 1.5L9 6" fill="none" stroke="#444" stroke-width="1.5"/></svg><div class="abs" style="left:5.5px;top:20px;width:7px;height:20px;background:#777"></div><svg class="abs" style="left:4px;top:93px" width="10" height="7"><path d="M1 1L5 5.5L9 1" fill="none" stroke="#444" stroke-width="1.5"/></svg></div></div>
<div class="abs" style="left:818.0px;top:332.3px;width:3px;height:2.6px;background:#bdbdbd"></div><div class="abs" style="left:822.2px;top:332.3px;width:3px;height:2.6px;background:#bdbdbd"></div><div class="abs" style="left:826.4px;top:332.3px;width:3px;height:2.6px;background:#bdbdbd"></div><div class="abs" style="left:830.6px;top:332.3px;width:3px;height:2.6px;background:#bdbdbd"></div><div class="abs" style="left:834.8px;top:332.3px;width:3px;height:2.6px;background:#bdbdbd"></div><div class="abs mtab dtab" style="left:307px;top:340px;width:108px"><span>Properties</span></div><div class="abs mtab dtab" style="left:420px;top:340px;width:128px"><span>Ext. Properties</span></div><div class="abs mtab dtab" style="left:554px;top:340px;width:98px"><span>Versions</span></div><div class="abs mtab dtab act" style="left:658px;top:340px;width:97px"><span>Preview</span></div><div class="abs mtab dtab" style="left:760px;top:340px;width:86px"><span>Notes</span></div><div class="abs mtab dtab" style="left:852px;top:340px;width:84px"><span>Links</span></div><div class="abs mtab dtab" style="left:942px;top:340px;width:91px"><span>History</span></div><div class="abs mtab dtab" style="left:1039px;top:340px;width:104px"><span>Signature</span></div><div class="abs mtab dtab" style="left:1149px;top:340px;width:106px;border-radius:4px 0 0 0"><span>Publishing</span></div><div class="abs" style="left:1255px;top:337px;width:98px;height:26px;background:#e9e9e9"></div><svg class="abs" style="left:1266px;top:345px" width="84" height="16"><path d="M11 2V14L3.8 8Z M37.2 2V14L44.2 8Z M67 5.2H79.4L73.2 12.4Z" fill="#666"/></svg><div id="dpane"></div>
<div id="pdf"><div class="abs" id="ptb"></div><div class="abs" id="psb"></div><div class="abs" style="left:4px;top:3px;width:32px;height:24.5px;background:#2e2e2e;border:1px solid #2a2a2a;border-radius:2px 0 0 2px"></div><div class="abs" style="left:36px;top:3px;width:30.5px;height:24.5px;border:1px solid #3a3a3a;border-left:0"></div><div class="abs" style="left:66.5px;top:3px;width:30.5px;height:24.5px;border:1px solid #3a3a3a;border-left:0;border-radius:0 2px 2px 0"></div><svg class="abs" style="left:12px;top:7.5px" width="16" height="16" ><use href="#i-pv_thumbs"/></svg><svg class="abs" style="left:43px;top:7.5px" width="16" height="16" ><use href="#i-pv_outline"/></svg><svg class="abs" style="left:73px;top:6.5px" width="18" height="18" ><use href="#i-pv_attach"/></svg><div class="abs" style="left:204.5px;top:3.5px;width:31px;height:24px;background:#2e2e2e;border:1px solid #2a2a2a;border-radius:2px"></div><svg class="abs" style="left:212px;top:8px" width="16" height="16" ><use href="#i-pv_sidebar"/></svg><svg class="abs" style="left:277px;top:8px" width="16" height="16" ><use href="#i-pv_find"/></svg><svg class="abs" style="left:310px;top:8px" width="16" height="16" ><use href="#i-pv_up"/></svg><div class="abs" style="left:333px;top:8px;width:1px;height:16px;background:#2f2f2f"></div><svg class="abs" style="left:341px;top:8px" width="16" height="16" ><use href="#i-pv_down"/></svg><div class="abs pin" style="left:366.5px;top:4.5px;width:53.5px;height:21px"><span>1</span></div><span class="abs ptx" style="left:424px;top:8px">of 2</span><svg class="abs" style="left:570px;top:9px" width="16" height="16"><path d="M3 8H13" stroke="#e8e8e8" stroke-width="2"/></svg><div class="abs" style="left:592px;top:9px;width:1px;height:16px;background:#2f2f2f"></div><svg class="abs" style="left:599px;top:9px" width="16" height="16"><path d="M3 8H13M8 3V13" stroke="#e8e8e8" stroke-width="2"/></svg><div class="abs pin" style="left:625.5px;top:4px;width:124px;height:22px;text-align:left"><span style="left:6px;right:auto">80%</span><svg class="abs" style="right:6px;top:5px" width="6" height="11"><path d="M0 4.3H6L3 0.8Z M0 6.3H6L3 9.8Z" fill="#ddd"/></svg></div><svg class="abs" style="left:867px;top:9px" width="16" height="16" ><use href="#i-pv_full"/></svg><svg class="abs" style="left:901px;top:9px" width="16" height="16" ><use href="#i-pv_print"/></svg><svg class="abs" style="left:934px;top:9px" width="16" height="16" ><use href="#i-pv_dl"/></svg><svg class="abs" style="left:968px;top:9px" width="16" height="16" ><use href="#i-pv_bm"/></svg><div class="abs" style="left:997px;top:8px;width:1px;height:17px;background:#2f2f2f"></div><svg class="abs" style="left:1010px;top:9px" width="16" height="16" ><use href="#i-pv_more"/></svg><div class="abs" style="left:40px;top:43px;width:114px;height:154px;background:#7d7d7d;border-radius:3px"></div><div class="abs" style="left:47px;top:50px;width:100px;height:140px;background:#fff;overflow:hidden"><svg class="abs" style="left:0;top:0" width="100" height="140" viewBox="0 0 100 140" font-family="'Liberation Sans',sans-serif"><text x="13.5" y="11.6" font-size="2.6" fill="#333">Interruptores Detectores</text><rect x="75.5" y="10" width="12.5" height="1.6" fill="#222"/><path d="M13.5 13.2H88.5" stroke="#555" stroke-width=".5"/><text x="13.5" y="16.6" font-size="2.2" font-weight="bold" fill="#222" textLength="50" lengthAdjust="spacingAndGlyphs">Movimiento MASTER 90° (9501 BL) y 220° (9502 BL)</text><path d="M13.5 17.2H88.5" stroke="#333" stroke-width=".35"/><rect x="13.8" y="18.6" width="74.8" height="116" fill="none" stroke="#b9e6f8" stroke-width=".6"/><path d="M14 75H88.5M14 89H88.5M14 105H88.5" stroke="#cfeefa" stroke-width=".5"/><path d="M28 21.2h46" stroke="#9a9a9a" stroke-width=".6"/><path d="M17 24.50h11.2M17 25.90h11.2M17 27.30h11.4M17 28.70h11.9M17 30.10h11.2M17 31.50h11.3M17 32.90h11.6M17 34.30h11.2M17 35.70h11.7M17 37.10h12.0M17 38.50h8.1" stroke="#aaa" stroke-width="0.55" fill="none"/><rect x="37" y="23" width="7" height="6.5" fill="#9c9c9c"/><path d="M44 24L52 23.5V30H44Z" fill="none" stroke="#888" stroke-width=".4"/><ellipse cx="53" cy="27.5" rx="3.5" ry="2.5" fill="#aaa"/><rect x="35.5" y="33.5" width="10" height="2.6" fill="#bbb"/><rect x="47" y="33.5" width="10" height="2.6" fill="none" stroke="#aaa" stroke-width=".4"/><path d="M65 24.50h20.5M65 26.00h20.6M65 27.50h20.1M65 29.00h13.4" stroke="#aaa" stroke-width="0.55" fill="none"/><path d="M68 31L65.5 36H70.5Z" fill="#ccc"/><path d="M78 31.5a4.5 4.5 0 0 0 9 0z" fill="#ccc"/><circle cx="82.5" cy="32" r="1.3" fill="#888"/><path d="M15 41.00h9.9M15 42.45h9.7M15 43.90h9.2M15 45.35h9.2M15 46.80h9.5M15 48.25h9.9M15 49.70h9.7M15 51.15h9.5M15 52.60h10.0M15 54.05h9.1M15 55.50h9.8M15 56.95h9.9M15 58.40h9.9" stroke="#b0b0b0" stroke-width="0.55" fill="none"/><path d="M28 41.00h11.0M28 42.45h11.9M28 43.90h11.7M28 45.35h11.4M28 46.80h11.5M28 48.25h11.5M28 49.70h11.5M28 51.15h11.1M28 52.60h11.7M28 54.05h10.9M28 55.50h11.6M28 56.95h11.9M28 58.40h11.7" stroke="#b0b0b0" stroke-width="0.55" fill="none"/><rect x="48.5" y="39.5" width="18.5" height="13.5" fill="none" stroke="#999" stroke-width=".4"/><rect x="69" y="39.5" width="18.5" height="13.5" fill="none" stroke="#999" stroke-width=".4"/><rect x="48.5" y="55" width="18.5" height="13.5" fill="none" stroke="#999" stroke-width=".4"/><rect x="69" y="55" width="18.5" height="13.5" fill="none" stroke="#999" stroke-width=".4"/><path d="M50 42h15M50 43.6h15M71 42h15M71 43.6h15M50 57.5h15M50 59h15M71 57.5h15M71 59h15" stroke="#aaa" stroke-width=".35"/><path d="M52 42v10M55 44v8M62 44v8M73 42v10M76 44v8M83 44v8M52 57v10M58 59v8M62 59v8M73 57v10M79 59v8M83 59v8" stroke="#aaa" stroke-width=".35"/><rect x="54" y="46" width="6" height="4" fill="none" stroke="#999" stroke-width=".35"/><rect x="76" y="46" width="6" height="4" fill="none" stroke="#999" stroke-width=".35"/><rect x="54" y="61" width="6" height="4" fill="none" stroke="#999" stroke-width=".35"/><rect x="76" y="61" width="6" height="4" fill="none" stroke="#999" stroke-width=".35"/><path d="M15 63.00h9.2M15 64.45h9.5M15 65.90h9.2M15 67.35h9.7M15 68.80h7.7" stroke="#b0b0b0" stroke-width="0.55" fill="none"/><path d="M28 63.00h9.9M28 64.45h9.8M28 65.90h9.4M28 67.35h9.3M28 68.80h9.7" stroke="#b0b0b0" stroke-width="0.55" fill="none"/><path d="M15 77.00h29.7M15 78.50h32.2M15 80.00h32.7M15 81.50h30.2M15 83.00h30.9M15 84.50h32.8" stroke="#b5b5b5" stroke-width="0.55" fill="none"/><path d="M52 77.00h22.0M52 78.50h16.3" stroke="#b5b5b5" stroke-width="0.55" fill="none"/><rect x="56" y="81" width="13" height="5.5" fill="none" stroke="#888" stroke-width=".45"/><rect x="71.5" y="81" width="13" height="5.5" fill="none" stroke="#888" stroke-width=".45"/><rect x="58" y="82.3" width="9" height="3" fill="none" stroke="#999" stroke-width=".35"/><rect x="73.5" y="82.3" width="9" height="3" fill="none" stroke="#999" stroke-width=".35"/><path d="M15 91.00h29.8M15 92.45h32.0M15 93.90h32.0M15 95.35h30.2M15 96.80h32.1M15 98.25h31.1M15 99.70h29.8M15 101.15h32.9M15 102.60h22.8" stroke="#bababa" stroke-width="0.55" fill="none"/><path d="M52 91.00h33.2M52 92.45h32.4M52 93.90h32.0M52 95.35h33.1M52 96.80h30.4" stroke="#bababa" stroke-width="0.55" fill="none"/><path d="M68 101l3-2l3 2l3-2l3 2" stroke="#999" stroke-width=".4" fill="none"/><path d="M15 107.00h30.2M15 108.40h32.1M15 109.80h30.9M15 111.20h30.4M15 112.60h32.9M15 114.00h30.7M15 115.40h31.9M15 116.80h31.6M15 118.20h32.4M15 119.60h32.6M15 121.00h31.7M15 122.40h30.2" stroke="#bcbcbc" stroke-width="0.55" fill="none"/><path d="M52 107.00h32.5M52 108.40h34.7M52 109.80h32.4M52 111.20h32.6M52 112.60h31.6M52 114.00h34.3M52 115.40h33.6M52 116.80h33.3M52 118.20h30.1" stroke="#bcbcbc" stroke-width="0.55" fill="none"/><path d="M57 123l2 4h-4zM69 123l2 4h-4zM81 123l2 4h-4z" fill="none" stroke="#999" stroke-width=".4"/><path d="M53 129.50h5.0" stroke="#bbb" stroke-width="0.55" fill="none"/><path d="M65 129.50h6.9" stroke="#bbb" stroke-width="0.55" fill="none"/><path d="M77 129.50h6.8" stroke="#bbb" stroke-width="0.55" fill="none"/><text x="10" y="132" font-size="1.6" fill="#999">10</text></svg></div><div class="abs" style="left:46px;top:207px;width:102px;height:61px;background:#2c2c2c"></div><div class="abs" style="left:47px;top:208px;width:100px;height:60px;background:#d4d4d4;overflow:hidden"><svg class="abs" style="left:0;top:0" width="100" height="60" viewBox="0 0 100 60"><path d="M12 10.5h24" stroke="#888" stroke-width=".7"/><rect x="75" y="9.3" width="13" height="1.7" fill="#444"/><path d="M12 12.6H88.5" stroke="#555" stroke-width=".7"/><path d="M12 15h14" stroke="#333" stroke-width=".9"/><path d="M12.6 60V16.6H88.6V60" fill="#dcdcdc" stroke="#4ab9ea" stroke-width="1.3"/><path d="M30 19.5h40" stroke="#999" stroke-width=".5"/><path d="M22 22h22M54 22h24" stroke="#aaa" stroke-width=".45"/><rect x="23" y="25" width="19" height="14" fill="none" stroke="#777" stroke-width=".45" stroke-dasharray="1.2 .6"/><path d="M26 27v10M30 27v10M34 27v10M38 27v10" stroke="#888" stroke-width=".4"/><circle cx="63" cy="33" r="8" fill="none" stroke="#888" stroke-width=".45"/><circle cx="63" cy="33" r="4.5" fill="none" stroke="#999" stroke-width=".4"/><path d="M55 33h16M63 25v16" stroke="#999" stroke-width=".35"/><path d="M76 26h9M76 28h9M76 30h7M78 33v5M82 33v5" stroke="#999" stroke-width=".4"/><path d="M15 44.00h12.5M15 45.50h12.9M15 47.00h13.0M15 48.50h11.9" stroke="#999" stroke-width="0.55" fill="none"/><path d="M52 44.00h32.1M52 45.50h31.2M52 47.00h30.1M52 48.50h32.3M52 50.00h31.8M52 51.50h32.2M52 53.00h32.8M52 54.50h22.2" stroke="#a5a5a5" stroke-width="0.55" fill="none"/><path d="M17 60V53L27 49L41 52V60Z" fill="#8a8a8a"/><path d="M27 49V60" stroke="#666" stroke-width=".4"/></svg></div><div class="abs" style="left:183px;top:32px;width:17px;height:236px;background:#f1f1f1"><svg class="abs" style="left:4.5px;top:6.5px" width="8" height="5"><path d="M0 4.5H8L4 0.5Z" fill="#a3a3a3"/></svg><div class="abs" style="left:2px;top:17px;width:13px;height:142px;background:#c1c1c1"></div><svg class="abs" style="left:4px;top:224px" width="9" height="6"><path d="M0 0.5H9L4.5 5.5Z" fill="#505050"/></svg></div><div class="abs" style="left:1021px;top:32px;width:17px;height:236px;background:#f1f1f1"><svg class="abs" style="left:4.5px;top:6.5px" width="8" height="5"><path d="M0 4.5H8L4 0.5Z" fill="#505050"/></svg><div class="abs" style="left:2px;top:27px;width:13px;height:26px;background:#c1c1c1"></div><svg class="abs" style="left:4px;top:224px" width="9" height="6"><path d="M0 0.5H9L4.5 5.5Z" fill="#505050"/></svg></div><div class="abs" id="page"><svg class="abs" style="left:0;top:0" width="634" height="235" viewBox="0 0 634 235" font-family="'Liberation Sans',sans-serif"><text x="88" y="15" font-size="13.6" font-weight="bold" fill="#151515" textLength="316.5" lengthAdjust="spacingAndGlyphs">Movimiento MASTER 90° (9501 BL) y 220° (9502 BL)</text><path d="M86 18.5H567" stroke="#222" stroke-width="1"/><path d="M85.2 240V28.8H565.7V240" fill="none" stroke="#8ad7f6" stroke-width="1.6"/><text x="179.5" y="43.4" font-size="9" fill="#2a2a2a" textLength="292.5" lengthAdjust="spacingAndGlyphs">INTERRUPTOR DETECTOR DE MOVIMIENTO DE SUPERFICIE ESTANCO</text><text x="107" y="65.6" font-size="6.6" fill="#555" textLength="51" lengthAdjust="spacingAndGlyphs">1. Caja soporte.</text><text x="107" y="74.6" font-size="6.6" fill="#555" textLength="36.5" lengthAdjust="spacingAndGlyphs">2. Carcasa.</text><text x="107" y="83.7" font-size="6.6" fill="#555" textLength="85.5" lengthAdjust="spacingAndGlyphs">3. Sistema de lentes para:</text><text x="113.5" y="92.7" font-size="6.6" fill="#555" textLength="50.5" lengthAdjust="spacingAndGlyphs">a) área remota,</text><text x="121.7" y="101.8" font-size="6.6" fill="#555" textLength="57.5" lengthAdjust="spacingAndGlyphs">media y próxima.</text><text x="113.5" y="110.8" font-size="6.6" fill="#555" textLength="52.5" lengthAdjust="spacingAndGlyphs">b) detección del</text><text x="121.7" y="119.8" font-size="6.6" fill="#555" textLength="54.5" lengthAdjust="spacingAndGlyphs">campo posterior.</text><text x="107" y="128.9" font-size="6.6" fill="#555" textLength="89" lengthAdjust="spacingAndGlyphs">4. Retardo de desconexión.</text><text x="107" y="137.9" font-size="6.6" fill="#555" textLength="59.5" lengthAdjust="spacingAndGlyphs">5. Tipo de servicio</text><text x="107" y="147.0" font-size="6.6" fill="#555" textLength="71.5" lengthAdjust="spacingAndGlyphs">6. Umbral de reacción</text><text x="107" y="156.0" font-size="6.6" fill="#555" textLength="35.5" lengthAdjust="spacingAndGlyphs">7. Persiana</text><text x="95" y="180.8" font-size="6.1" fill="#5a5a5a" textLength="57.5" lengthAdjust="spacingAndGlyphs">DATOS TECNICOS:</text><text x="95" y="188.8" font-size="6.1" fill="#5a5a5a" textLength="48.5" lengthAdjust="spacingAndGlyphs">Tensión nominal:</text><text x="174.7" y="188.8" font-size="6.1" fill="#5a5a5a" textLength="43" lengthAdjust="spacingAndGlyphs">230 V~, 50 Hz.</text><text x="95" y="196" font-size="6.1" fill="#5a5a5a" textLength="57.5" lengthAdjust="spacingAndGlyphs">Potencia de ruptura:</text><text x="174.7" y="196" font-size="6.1" fill="#5a5a5a" textLength="61" lengthAdjust="spacingAndGlyphs">16A/230 V~, cosj 0,5.</text><text x="95" y="203.8" font-size="6.1" fill="#5a5a5a" textLength="52" lengthAdjust="spacingAndGlyphs">Potencia disipada.</text><text x="174.7" y="203.8" font-size="6.1" fill="#5a5a5a" textLength="17.5" lengthAdjust="spacingAndGlyphs">1,5 W.</text><text x="95" y="211.8" font-size="6.1" fill="#5a5a5a" textLength="60" lengthAdjust="spacingAndGlyphs">Angulo de detección:</text><text x="174.7" y="211.8" font-size="6.1" fill="#5a5a5a" textLength="47" lengthAdjust="spacingAndGlyphs">Horizontal: 220°.</text><text x="174.7" y="218.5" font-size="6.1" fill="#5a5a5a" textLength="40" lengthAdjust="spacingAndGlyphs">Vertical: 110°.</text><text x="95" y="226.9" font-size="6.1" fill="#5a5a5a" textLength="57" lengthAdjust="spacingAndGlyphs">Sensor crepuscular:</text><text x="174.7" y="226.9" font-size="6.1" fill="#5a5a5a" textLength="41" lengthAdjust="spacingAndGlyphs">5 a 1.000 Lux.</text><text x="95" y="234.5" font-size="6.1" fill="#5a5a5a" textLength="45" lengthAdjust="spacingAndGlyphs">Tiempo muerto:</text><text x="174.7" y="234.5" font-size="6.1" fill="#5a5a5a" textLength="44" lengthAdjust="spacingAndGlyphs">1,28 segundos.</text><text x="413.7" y="67.6" font-size="6.7" fill="#555" textLength="138.3" lengthAdjust="spacingAndGlyphs">Datos válidos para una altura de montaje</text><text x="413.7" y="76.8" font-size="6.7" fill="#555" textLength="31" lengthAdjust="spacingAndGlyphs">de 2,5 m.</text><text x="413.7" y="88.6" font-size="6.7" fill="#555" textLength="138.3" lengthAdjust="spacingAndGlyphs">Las cuatro áreas de captación están si-</text><text x="413.7" y="97.7" font-size="6.7" fill="#555" textLength="78" lengthAdjust="spacingAndGlyphs">multáneamente activas.</text><path d="M238.3 73.4 L245.2 71.4 L245.2 100.0 L238.3 101.9Z" fill="#fff" stroke="#3a3a3a" stroke-width=".55"/><path d="M245.2 71.4 L269.8 75.4 L269.8 106.8 L262.9 106.8 L245.2 100.0Z" fill="#fff" stroke="#3a3a3a" stroke-width=".55"/><path d="M238.3 101.9 L262.9 106.8" fill="none" stroke="#3a3a3a" stroke-width="0.55"/><path d="M246.6 72.4 L255.0 74.0 L255.0 85.2 L246.6 91.7Z" fill="#555" stroke="#333" stroke-width=".4"/><path d="M262.9 76.4 L269.2 77.5 L269.2 93.1 L262.9 91.7Z" fill="#666" stroke="#333" stroke-width=".4"/><path d="M249.5 74.4 L249.5 88.2 M252.1 74.8 L252.1 86.2 M247.2 78.3 L255.0 79.3 M247.2 82.3 L255.0 82.6" stroke="#ddd" stroke-width=".4" fill="none"/><path d="M246.6 91.7 L262.9 84.2 M255.0 79.3 L262.9 80.3 M251.1 93.1 L251.1 101.5 M260.5 88.2 L260.5 98.0 M246.6 91.7 L246.6 100.3" fill="none" stroke="#3a3a3a" stroke-width="0.55"/><circle cx="259.0" cy="98.0" r="3.6" fill="#e8e8e8" stroke="#444" stroke-width=".5"/><circle cx="259.0" cy="98.0" r="2" fill="#c8c8c8"/><path d="M262.9 103.9 L268.8 105.5 L268.8 107.4 L262.9 106.2Z" fill="#777" stroke="#333" stroke-width=".4"/><path d="M269.8 66.5 L269.8 107.8 L299.3 111.7 L311.6 96.0 L311.1 81.3 L288.4 83.8 L269.8 66.5" fill="#fff" stroke="#3a3a3a" stroke-width=".55"/><path d="M269.8 107.8 L290.4 83.2" fill="none" stroke="#3a3a3a" stroke-width="0.55"/><path d="M269.8 66.5 L284.5 66.5 L355.3 74.8" fill="none" stroke="#3a3a3a" stroke-width="0.55"/><path d="M285.5 66.5 C277.6 68.5 277.6 81.3 284.5 83.8 L314.0 78.3" fill="none" stroke="#3a3a3a" stroke-width="0.55"/><path d="M311.1 81.3 C323.8 72.4 347.4 71.4 355.3 75.4 L355.3 98.0 C347.4 104.9 323.8 101.9 311.1 96.0 Z" fill="#fff" stroke="#3a3a3a" stroke-width=".55"/><path d="M314.4 80.7 C323.8 76.8 343.5 76.4 355.3 77.9 L355.3 95.2 C343.5 97.2 325.8 96.0 315.0 92.5 Z" fill="#8c8c8c" stroke="#444" stroke-width=".5"/><path d="M311.6 96.4 C323.8 103.9 347.4 106.8 355.3 99.0" fill="none" stroke="#3a3a3a" stroke-width="0.55"/><path d="M313.0 94.4 C324.8 100.3 346.4 102.9 354.9 96.4" fill="none" stroke="#333" stroke-width="1"/><path d="M244.8 59.6 L243.2 72.0 M282.9 56.3 L286.5 71.4 M349.4 63.6 L345.1 79.3 M325.8 100.3 L317.0 121.6 M332.3 101.5 L329.3 121.2 M337.6 101.9 L341.1 121.2 M347.4 102.3 L350.4 116.1 M228.5 127.9 L239.9 139.3 M315.6 127.9 L326.8 139.3" fill="none" stroke="#3a3a3a" stroke-width="0.55"/><text x="243.6" y="58.1" font-size="5.6" fill="#555">1</text><text x="280.0" y="54.5" font-size="5.6" fill="#555">2</text><text x="346.8" y="62.2" font-size="5.6" fill="#555">3a</text><text x="347.8" y="120.4" font-size="5.6" fill="#555">3b</text><text x="313.0" y="125.1" font-size="5.6" fill="#555">6</text><text x="326.2" y="125.1" font-size="5.6" fill="#555">5</text><text x="340.0" y="125.1" font-size="5.6" fill="#555">4</text><text x="225.5" y="127.9" font-size="5.6" fill="#555">7</text><path d="M222.0 139.3 L300.6 139.3 L300.6 152.6 Q261.3 164.8 222.0 152.6 Z" fill="#fff" stroke="#3a3a3a" stroke-width=".6"/><path d="M224.7 139.3V153.5M227.4 139.3V154.2M230.1 139.3V154.9M232.8 139.3V155.5M235.5 139.3V156.1M238.3 139.3V156.6M241.0 139.3V157.1M243.7 139.3V157.5M246.4 139.3V157.9M249.1 139.3V158.2M251.8 139.3V158.4M254.5 139.3V158.6M257.2 139.3V158.7M260.0 139.3V158.7M262.7 139.3V158.7M265.4 139.3V158.7M268.1 139.3V158.6M270.8 139.3V158.4M273.5 139.3V158.2M276.2 139.3V157.9M278.9 139.3V157.5M281.7 139.3V157.1M284.4 139.3V156.6M287.1 139.3V156.1M289.8 139.3V155.5M292.5 139.3V154.9M295.2 139.3V154.2M297.9 139.3V153.5" stroke="#3a3a3a" stroke-width=".45" fill="none"/><path d="M222.0 145.2 L300.6 145.2 M222.0 152.6 L300.6 152.6" stroke="#3a3a3a" stroke-width=".45" fill="none"/><path d="M308.1 139.3 L387.7 139.3 L387.7 151.5 Q347.8 164.8 308.1 151.5 Z" fill="#fff" stroke="#3a3a3a" stroke-width=".6"/><path d="M332.3 139.3V157.1M334.9 139.3V157.4M337.6 139.3V157.7M340.3 139.3V157.9M342.9 139.3V158.0M345.6 139.3V158.1M348.2 139.3V158.2M350.9 139.3V158.1M353.5 139.3V158.0M356.2 139.3V157.9M358.8 139.3V157.6M361.5 139.3V157.4M364.1 139.3V157.0" stroke="#3a3a3a" stroke-width=".45" fill="none"/><path d="M332.3 147.5 L335.6 146.2 L360.8 146.2 L364.1 147.5 M332.3 152.1 L364.1 152.1" stroke="#3a3a3a" stroke-width=".45" fill="none"/><path d="M453.1 109.8 L438.7 123.6 L438.7 133.4 Q453.1 139.3 467.8 133.4 L467.8 123.6 Z" fill="#dadada"/><path d="M453.1 109.8 L442.9 120.1 Q453.1 125.6 463.3 120.1 Z" fill="#b0b0b0"/><path d="M453.1 108.8 L447.6 114.7 Q453.1 117.3 458.6 114.7 Z" fill="#8a8a8a"/><path d="M453.1 105.9 L458.0 108.3 L457.0 111.0 L449.2 111.0 L448.2 108.3Z" fill="#4a4a4a"/><path d="M469.8 108.3 L469.8 137.0" stroke="#333" stroke-width=".6" fill="none"/><path d="M468.6 136.4 L471.0 136.4 L469.8 139.3Z" fill="#222"/><path d="M438.3 144.3 L452.7 144.3 M454.5 144.3 L468.2 144.3" stroke="#333" stroke-width=".6" fill="none"/><path d="M437.0 144.3 L439.7 143.1 L439.7 145.4Z M469.6 144.3 L466.9 143.1 L466.9 145.4Z" fill="#222"/><path d="M523.5 114.2 L551.6 106.2 A29.2 29.2 0 1 1 495.4 106.2 Z" fill="#d9d9d9"/><path d="M523.5 114.2 L537.7 110.1 A14.8 14.8 0 1 1 509.3 110.1 Z" fill="#b4b4b4"/><path d="M523.5 114.2 L530.4 112.2 A7.2 7.2 0 1 1 516.6 112.2 Z" fill="#8a8a8a"/><path d="M523.5 112.2 L528.8 114.5 L527.8 117.7 L519.2 117.7 L518.2 114.5Z" fill="#4a4a4a"/><path d="M523.5 114.7 L523.5 144.3" stroke="#222" stroke-width=".7" fill="none"/><path d="M522.1 143.7 L524.9 143.7 L523.5 146.6Z" fill="#222"/><text x="442.9" y="142.3" font-size="3.6" fill="#555">6 m</text><text x="456.6" y="142.3" font-size="3.6" fill="#555">6 m</text><text x="477.7" y="140.7" font-size="3.6" fill="#555">12 m</text><text x="525.5" y="136.4" font-size="3.6" fill="#555">16 m max</text><path d="M302.8 240V171.6H424.6V240 M434.4 240V171.6H556.4V240" stroke="#555" stroke-width=".8" fill="none"/><path d="M315.1 181.4 L418.0 181.4 M315.1 188.2 L418.0 188.2" stroke="#777" stroke-width=".9" fill="none"/><path d="M326.4 181.4 L326.4 246.0 M338.1 188.2 L338.1 230.6 L354.1 230.6 L354.1 222.0 M403.3 188.2 L403.3 208.7 M403.3 224.7 L403.3 246.0 M366.4 222.0 L366.4 246.0 M379.1 222.0 L379.1 246.0" stroke="#444" stroke-width=".6" fill="none"/><circle cx="326.4" cy="181.4" r="1.3" fill="#222"/><circle cx="338.1" cy="188.2" r="1.3" fill="#222"/><circle cx="403.3" cy="188.2" r="1.3" fill="#222"/><path d="M347.3 197.8 L387.3 197.8 L387.3 224.5 L347.3 224.5Z" stroke="#555" stroke-width=".6" stroke-dasharray="3.2 1.2 0.8 1.2" fill="none"/><path d="M350.4 215.2 L356.9 215.2 L356.9 222.0 L350.4 222.0Z" stroke="#333" stroke-width=".7" fill="#fff"/><path d="M363.3 215.2 L369.9 215.2 L369.9 222.0 L363.3 222.0Z" stroke="#333" stroke-width=".7" fill="#fff"/><path d="M376.0 215.2 L382.6 215.2 L382.6 222.0 L376.0 222.0Z" stroke="#333" stroke-width=".7" fill="#fff"/><circle cx="403.3" cy="216.7" r="7.8" fill="#fff" stroke="#333" stroke-width=".7"/><path d="M397.8 211.2L408.8 222.2M408.8 211.2L397.8 222.2" stroke="#333" stroke-width=".7"/><text x="345.9" y="195.8" font-size="4.6" fill="#555" textLength="44.5" lengthAdjust="spacingAndGlyphs">Master 90° y 220°</text><text x="305.9" y="183.1" font-size="4.2" fill="#666">P,L</text><text x="307.3" y="190.0" font-size="4.2" fill="#666">N</text><text transform="translate(416.6 223.8) rotate(-90)" font-size="4.2" fill="#b0704a">Carga</text><text x="352.4" y="220.6" font-size="4" fill="#555">N</text><text x="365.1" y="220.6" font-size="4" fill="#555">P</text><text transform="translate(356.1 213.2) rotate(-90)" font-size="3" fill="#777">Azul</text><text transform="translate(368.4 213.2) rotate(-90)" font-size="3" fill="#777">Negro</text><text transform="translate(380.7 213.2) rotate(-90)" font-size="3" fill="#777">Lila</text><text transform="translate(384.8 213.2) rotate(-90)" font-size="3" fill="#777">o gris</text><path d="M446.7 183.5 L549.6 183.5 M446.7 190.2 L549.6 190.2" stroke="#777" stroke-width=".9" fill="none"/><path d="M458.0 183.5 L458.0 248.0 M469.7 190.2 L469.7 232.7 L485.7 232.7 L485.7 224.1 M534.9 190.2 L534.9 210.7 M534.9 226.7 L534.9 248.0 M498.0 224.1 L498.0 248.0 M510.7 224.1 L510.7 248.0" stroke="#444" stroke-width=".6" fill="none"/><circle cx="458.0" cy="183.5" r="1.3" fill="#222"/><circle cx="469.7" cy="190.2" r="1.3" fill="#222"/><circle cx="534.9" cy="190.2" r="1.3" fill="#222"/><path d="M478.9 199.9 L518.9 199.9 L518.9 226.5 L478.9 226.5Z" stroke="#555" stroke-width=".6" stroke-dasharray="3.2 1.2 0.8 1.2" fill="none"/><path d="M482.0 217.3 L488.5 217.3 L488.5 224.1 L482.0 224.1Z" stroke="#333" stroke-width=".7" fill="#fff"/><path d="M494.9 217.3 L501.4 217.3 L501.4 224.1 L494.9 224.1Z" stroke="#333" stroke-width=".7" fill="#fff"/><path d="M507.6 217.3 L514.2 217.3 L514.2 224.1 L507.6 224.1Z" stroke="#333" stroke-width=".7" fill="#fff"/><circle cx="534.9" cy="218.7" r="7.8" fill="#fff" stroke="#333" stroke-width=".7"/><path d="M529.4 213.2L540.4 224.2M540.4 213.2L529.4 224.2" stroke="#333" stroke-width=".7"/><text x="477.5" y="197.8" font-size="4.6" fill="#555" textLength="44.5" lengthAdjust="spacingAndGlyphs">Master 90° y 220°</text><text x="437.5" y="185.1" font-size="4.2" fill="#666">P,L</text><text x="438.9" y="192.1" font-size="4.2" fill="#666">N</text><text transform="translate(548.2 225.9) rotate(-90)" font-size="4.2" fill="#b0704a">Carga</text><text x="484.0" y="222.6" font-size="4" fill="#555">N</text><text x="496.7" y="222.6" font-size="4" fill="#555">P</text><text transform="translate(487.7 215.2) rotate(-90)" font-size="3" fill="#777">Azul</text><text transform="translate(500.0 215.2) rotate(-90)" font-size="3" fill="#777">Negro</text><text transform="translate(512.3 215.2) rotate(-90)" font-size="3" fill="#777">Lila</text><text transform="translate(516.4 215.2) rotate(-90)" font-size="3" fill="#777">o gris</text><text transform="translate(448.8 234.7) rotate(-90)" font-size="4.6" fill="#555">Pulsador NC</text><path d="M452.9 212.2 L462.7 212.2 L462.7 227.5 L452.9 227.5Z" stroke="#555" stroke-width=".6" stroke-dasharray="3.2 1.2 0.8 1.2" fill="#fff"/><path d="M458.0 212.2 L458.0 215.2 L455.9 223.8 L458.0 223.8 L458.0 227.5" stroke="#333" stroke-width=".6" fill="none"/></svg></div></div>
<svg class="abs" style="left:720px;top:160px" width="20" height="26"><path d="M4.2 4.1V20.4L8.2 17.1L11 22.6L14 21.5L12 16.5L16 15.9Z" fill="#fff" stroke="#1a1a2a" stroke-width="1.1" stroke-linejoin="round"/></svg><div id="status"><svg class="abs" style="left:4px;top:2px" width="14" height="13" ><use href="#i-sb_note"/></svg><svg class="abs" style="left:1150px;top:0.5px" width="16" height="14" ><use href="#i-sb_clip"/></svg><span class="abs sbt" style="left:1166.3px;top:0px">0</span><svg class="abs" style="left:1187px;top:1.5px" width="16" height="14" ><use href="#i-sb_lock"/></svg><span class="abs sbt" style="left:1202.5px;top:0px">2</span><svg class="abs" style="left:1223px;top:0.5px" width="16" height="14" ><use href="#i-sb_edit"/></svg><span class="abs sbt" style="left:1239px;top:0px">17</span><svg class="abs" style="left:1258px;top:2px" width="16" height="14" ><use href="#i-sb_mail"/></svg><span class="abs sbt" style="left:1274.6px;top:0px">200</span><svg class="abs" style="left:1295px;top:1px" width="16" height="14" ><use href="#i-sb_cal"/></svg><span class="abs sbt" style="left:1310.3px;top:0px">0</span><svg class="abs" style="left:1330px;top:0.5px" width="16" height="14" ><use href="#i-sb_gear"/></svg><span class="abs sbt" style="left:1346.8px;top:0px">0</span></div>
</body></html>
